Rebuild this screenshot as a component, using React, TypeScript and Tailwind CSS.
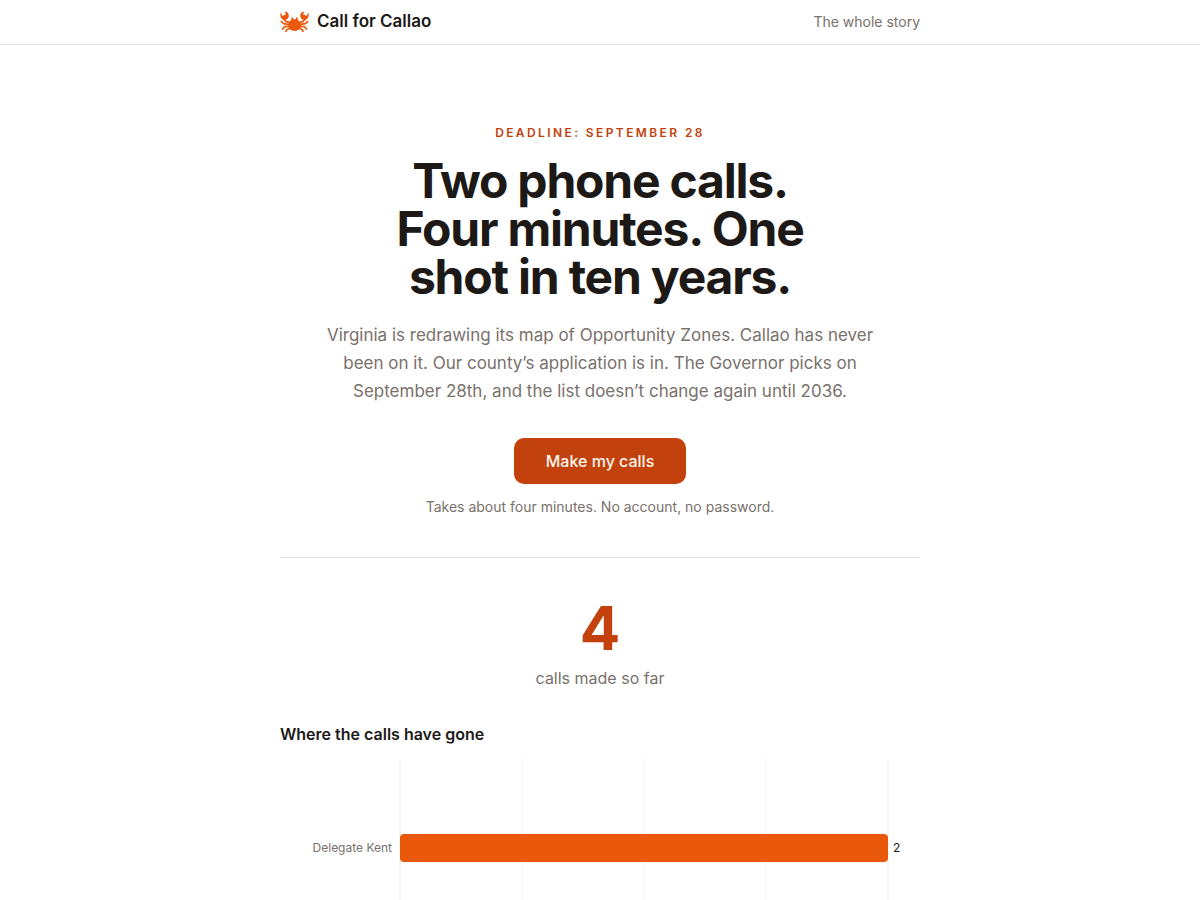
const chartData = [{ office: "Delegate Kent", calls: 2 }];

const maxCalls = 2;

function CrabLogo() {
  return (
    <svg
      viewBox="0 0 87 66"
      className="h-[22px] w-[29px] text-[#ea580c]"
      fill="currentColor"
      aria-hidden="true"
    >
      <ellipse cx="43.5" cy="42" rx="19" ry="18" />
      <rect x="34" y="19" width="5" height="9" rx="2" />
      <rect x="48" y="19" width="5" height="9" rx="2" />
      <CrabSide />
      <g transform="translate(87 0) scale(-1 1)">
        <CrabSide />
      </g>
    </svg>
  );
}

function CrabSide() {
  return (
    <>
      {/* Claw */}
      <path d="M3 3C0 8 0 16 4 22c4 6 12 7 17 3 5-4 7-11 4-17C23 4 18 1 13 3c3 2 5 5 4 8-3 0-6 1-8 4C5 12 3 8 3 3Z" />
      {/* Arm and legs */}
      <g fill="none" stroke="currentColor" strokeWidth="5" strokeLinecap="round" strokeLinejoin="round">
        <path d="M4 32l7 6 14 2" />
        <path d="M12 25l5 6 10 3" />
        <path d="M26 46l-12 1-7 7" />
        <path d="M29 52l-9 4-2 5" />
      </g>
    </>
  );
}

export default function App() {
  return (
    <div className="min-h-screen bg-white font-['Inter',sans-serif] text-stone-900">
      <header className="border-b border-neutral-200">
        <div className="mx-auto flex h-11 max-w-[640px] items-center justify-between">
          <a href="#top" className="flex items-center gap-2 text-[17px] font-semibold">
            <CrabLogo />
            Call for Callao
          </a>
          <a href="#story" className="text-sm text-stone-500">
            The whole story
          </a>
        </div>
      </header>

      <main id="top" className="mx-auto max-w-[640px] pt-20">
        {/* Hero */}
        <section className="flex flex-col items-center border-b border-neutral-200 pb-10 text-center">
          <p className="text-xs font-semibold uppercase tracking-[0.2em] text-[#c2410c]">
            Deadline: September 28
          </p>
          <h1 className="mt-4 max-w-md text-5xl leading-none font-bold tracking-tight">
            Two phone calls. Four minutes. One shot in ten years.
          </h1>
          <p className="mt-5 max-w-xl text-[17px] leading-7 text-stone-500">
            Virginia is redrawing its map of Opportunity Zones. Callao has never been on it. Our
            county’s application is in. The Governor picks on September 28th, and the list doesn’t
            change again until 2036.
          </p>
          <button
            type="button"
            className="mt-[33px] rounded-[10px] bg-[#c2410c] px-8 py-[11px] font-medium text-orange-50"
          >
            Make my calls
          </button>
          <p className="mt-[13px] text-sm text-stone-500">
            Takes about four minutes. No account, no password.
          </p>
        </section>

        {/* Call count */}
        <section className="pt-10 text-center">
          <p className="text-6xl leading-none font-bold text-[#c2410c]">4</p>
          <p className="mt-2 text-stone-500">calls made so far</p>
        </section>

        {/* Calls by office */}
        <section className="mt-8">
          <h2 className="font-semibold">Where the calls have gone</h2>
          <div className="mt-3">
            {chartData.map((row) => (
              <div key={row.office} className="flex h-[180px] items-stretch text-xs">
                <span className="flex w-[120px] items-center justify-end pr-2 text-stone-500">
                  {row.office}
                </span>
                <div className="relative flex flex-1 items-center">
                  <div className="absolute inset-y-0 -inset-x-px flex justify-between">
                    <span className="w-0.5 bg-neutral-100/60" />
                    <span className="w-0.5 bg-neutral-100/60" />
                    <span className="w-0.5 bg-neutral-100/60" />
                    <span className="w-0.5 bg-neutral-100/60" />
                    <span className="w-0.5 bg-neutral-100/60" />
                  </div>
                  <div
                    className="relative h-7 rounded bg-[#ea580c]"
                    style={{ width: `${(row.calls / maxCalls) * 100}%` }}
                  />
                </div>
                <span className="flex w-8 items-center pl-[5px]">{row.calls}</span>
              </div>
            ))}
          </div>
        </section>
      </main>
    </div>
  );
}
